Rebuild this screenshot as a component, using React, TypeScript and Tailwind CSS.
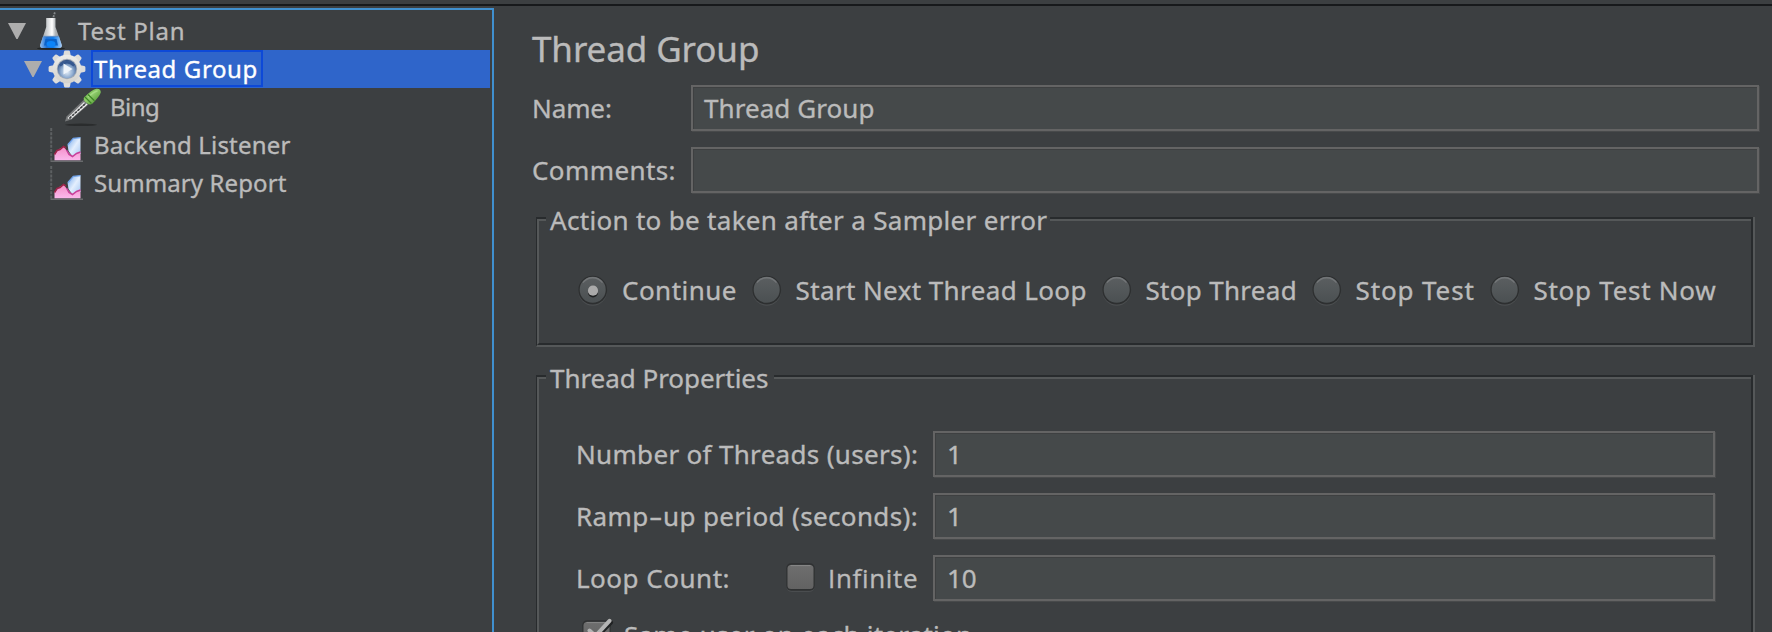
import type { ReactNode } from "react";

function Arrow() {
  return (
    <svg width="18" height="16" viewBox="0 0 18 16" className="shrink-0">
      <path d="M0 0H18L9.6 16H8.4Z" fill="#adadad" />
    </svg>
  );
}

function FlaskIcon() {
  return (
    <svg width="38" height="38" viewBox="0 0 38 38" className="shrink-0">
      <defs>
        <linearGradient id="glass" x1="0" x2="1" y1="0" y2="0">
          <stop offset="0" stopColor="#8e9396" />
          <stop offset=".35" stopColor="#d4d7d9" />
          <stop offset=".55" stopColor="#ffffff" />
          <stop offset=".7" stopColor="#b3b7ba" />
          <stop offset="1" stopColor="#85898d" />
        </linearGradient>
        <linearGradient id="liquid" x1="0" x2="1" y1="0" y2="0">
          <stop offset="0" stopColor="#8fbdf0" />
          <stop offset=".3" stopColor="#1c6fd4" />
          <stop offset=".6" stopColor="#0a7cf0" />
          <stop offset="1" stopColor="#a9cdf5" />
        </linearGradient>
      </defs>
      <ellipse cx="19" cy="36.500" rx="14" ry="1.300" fill="#222526" />
      <path d="M20.500 8L23 0" stroke="#85898c" strokeWidth="1.800" strokeDasharray="2 1" />
      <path d="M14.200 6H23.500V15L29.800 33Q30.300 36 27 36H10.500Q7.800 36 8.200 33L14.200 15Z" fill="url(#glass)" />
      <path d="M11 24.500H27L29.800 33Q30.300 36 27 36H10.500Q7.800 36 8.200 33Z" fill="url(#liquid)" />
      <path d="M13.500 27H24.500L26 33.500H12Z" fill="#0b62c8" />
      <ellipse cx="19" cy="32" rx="4.500" ry="3" fill="#0b84fa" />
      <path d="M11.500 24.500H26.500" stroke="#5d8fc9" strokeWidth="1.300" />
    </svg>
  );
}

const teeth = [0, 45, 90, 135, 180, 225, 270, 315];

function GearIcon() {
  return (
    <svg width="38" height="38" viewBox="0 0 38 38" className="shrink-0">
      <defs>
        <linearGradient id="gear" x1="0" x2="0" y1="0" y2="38" gradientUnits="userSpaceOnUse">
          <stop offset="0" stopColor="#f0f0ee" />
          <stop offset=".6" stopColor="#dddcd8" />
          <stop offset="1" stopColor="#cfcec9" />
        </linearGradient>
        <radialGradient id="hub" cx=".5" cy=".65" r=".65">
          <stop offset="0" stopColor="#e6eff8" />
          <stop offset=".5" stopColor="#8facd0" />
          <stop offset="1" stopColor="#27477e" />
        </radialGradient>
      </defs>
      <g fill="#dedddA">
        {teeth.map((a) => (
          <path key={a} d="M16 1.800Q16.200 .6 17.300 .6H20.700Q21.800 .6 22 1.800L23.200 8H14.800Z" transform={`rotate(${a} 19 19)`} />
        ))}
        <circle cx="19" cy="19" r="14.300" fill="url(#gear)" />
      </g>
      <circle cx="19" cy="19" r="10.200" fill="#a3acb8" />
      <circle cx="19" cy="19" r="9.300" fill="url(#hub)" />
      <path d="M11.800 15.500Q19 9 26.200 15.500" stroke="#34578f" strokeWidth="2.500" fill="none" />
      <path d="M15.500 13.500L24.500 19L15.500 24.500Z" fill="#eef4fa" />
    </svg>
  );
}

function DropperIcon() {
  return (
    <svg width="38" height="38" viewBox="0 0 38 38" className="shrink-0">
      <defs>
        <linearGradient id="bulb" x1="0" x2="1" y1="0" y2="1">
          <stop offset="0" stopColor="#5fae3a" />
          <stop offset=".45" stopColor="#8fcb6c" />
          <stop offset="1" stopColor="#3f8a22" />
        </linearGradient>
      </defs>
      <ellipse cx="17" cy="36.800" rx="16" ry="1.200" fill="#2a2c2d" />
      <path d="M1 33.500L2.500 28.500L19.500 12L24.500 16.500L7.500 31.500Z" fill="#77797a" />
      <path d="M4 30.500L20.500 14.500" stroke="#e6e6e6" strokeWidth="1.500" />
      <path d="M6.500 30.500L23 16" stroke="#f4f4f4" strokeWidth="1.500" />
      <path d="M5.500 30.300L21.500 15.500" stroke="#3d3f40" strokeWidth="1.600" strokeDasharray="2.500 1.200" />
      <path d="M20 9.500Q28 1.500 32.500 .7Q37 .5 36.800 4.500Q35.500 8.500 28.500 15.500Q26 17.500 23 15.200Q18.500 12 20 9.500Z" fill="url(#bulb)" />
      <path d="M24 9Q30 3.500 33.500 3" stroke="#a5da84" strokeWidth="1.600" fill="none" />
      <path d="M21 9L27.500 15.500M24 6.500L30.500 12.800" stroke="#3c8424" strokeWidth="1.200" />
    </svg>
  );
}

function ChartIcon() {
  return (
    <svg width="38" height="38" viewBox="0 0 38 38" className="shrink-0">
      <defs>
        <linearGradient id="sky" x1="0" x2="1" y1="0" y2="1">
          <stop offset="0" stopColor="#6fa5ea" />
          <stop offset=".5" stopColor="#e4effd" />
          <stop offset="1" stopColor="#a0c5f3" />
        </linearGradient>
        <linearGradient id="rose" x1="0" x2="0" y1="0" y2="1">
          <stop offset="0" stopColor="#f58fc8" />
          <stop offset="1" stopColor="#fbb8ec" />
        </linearGradient>
      </defs>
      <path d="M3.200 2V35" stroke="#5d6062" strokeWidth="2" strokeDasharray="3 1.200" />
      <path d="M2.500 35.200H35" stroke="#696b6d" strokeWidth="1.600" />
      <path d="M19.500 18.500L25 12.500L32.500 11.500V28L29 28L25 31L20.500 25Z" fill="url(#sky)" />
      <path d="M20 18.500L25.300 12.300L32.500 11.600" stroke="#6fa2ea" strokeWidth="1.300" fill="none" />
      <path d="M6.500 34.200V28L12 22.500L16 21L18.500 24.500L24 30L28 27.500L32.500 26.500V34.200Z" fill="url(#rose)" />
      <path d="M6.500 28.500L9 24.500L12 23.500L15.500 20.500L18 22" stroke="#9c2348" strokeWidth="1.600" fill="none" />
      <path d="M18.500 24L21 28.500L24.500 30.500L28.500 27.500L32.500 26" stroke="#c9409a" strokeWidth="1.500" fill="none" />
    </svg>
  );
}

function TreeRow({ className, children }: { className: string; children: ReactNode }) {
  return <div className={`flex h-[38px] items-center whitespace-nowrap text-[24px] leading-[38px] ${className}`}>{children}</div>;
}

function Field({ className, children }: { className: string; children?: ReactNode }) {
  return (
    <div className={`flex h-[46px] items-center border-2 border-[#646464] bg-[#45494a] pl-[11px] shadow-[1px_1px_0_#484a4b,inset_1px_1px_0_#3e4041] ${className}`}>
      {children}
    </div>
  );
}

function Radio({ checked }: { checked?: boolean }) {
  return (
    <svg width="32" height="34" viewBox="0 0 32 34" className="shrink-0">
      <defs>
        <linearGradient id="knob" x1="0" x2="0" y1="0" y2="1">
          <stop offset="0" stopColor="#5b5f61" />
          <stop offset="1" stopColor="#4b5052" />
        </linearGradient>
      </defs>
      <circle cx="15.700" cy="18.500" r="14.300" fill="#4b4e50" />
      <circle cx="15.700" cy="17.100" r="14.400" fill="#2d2f30" />
      <circle cx="15.700" cy="16.800" r="13" fill="url(#knob)" />
      <path d="M5.900 9.700A12.200 12.200 0 0 1 25.500 9.700" stroke="#737678" strokeWidth="1.300" fill="none" />
      {checked && (
        <>
          <circle cx="16" cy="19.500" r="5" fill="#1f2122" />
          <circle cx="16" cy="17.700" r="5.100" fill="#aaaaaa" />
        </>
      )}
    </svg>
  );
}

function Checkbox({ checked }: { checked?: boolean }) {
  return (
    <svg width="32" height="34" viewBox="0 0 32 34" className="shrink-0 overflow-visible">
      <defs>
        <linearGradient id="box" x1="0" x2="0" y1="0" y2="1">
          <stop offset="0" stopColor="#6e6e6e" />
          <stop offset="1" stopColor="#626262" />
        </linearGradient>
      </defs>
      <rect x="1.500" y="5" width="28" height="26" rx="5" fill="#4a4d4f" />
      <rect x="1.200" y="2.300" width="28.600" height="27.500" rx="5" fill="#2f3132" />
      <rect x="2.500" y="4" width="26" height="24" rx="3.500" fill="url(#box)" />
      <path d="M5.500 4.500H25.500" stroke="#858585" strokeWidth="1.200" />
      {checked && (
        <>
          <path d="M9 14.500L14.500 20.500L30 4.500" stroke="#202223" strokeWidth="4" fill="none" strokeLinecap="round" />
          <path d="M8.500 12.500L14.500 18L28.500 2.800" stroke="#b4b4b4" strokeWidth="4" fill="none" strokeLinecap="round" />
        </>
      )}
    </svg>
  );
}

function Group({ title, titleClass, className, children }: { title: string; titleClass: string; className: string; children: ReactNode }) {
  return (
    <section className={`flex flex-col ${className}`}>
      <header className="flex h-9">
        <div className="mt-[15px] w-[10px] border-l border-t-2 border-[#282b2d]">
          <div className="h-full border-l-2 border-t-2 border-[#555859]" />
        </div>
        <h2 className={`h-9 whitespace-nowrap pl-1 leading-9 ${titleClass}`}>{title}</h2>
        <div className="mt-[15px] flex-1 border-r-2 border-[#555859]">
          <div className="h-full border-r-2 border-t-2 border-[#282b2d]">
            <div className="border-t-2 border-[#555859]" />
          </div>
        </div>
      </header>
      <div className="flex flex-1 border-b-2 border-l border-[#555859] border-l-[#282b2d]">
        <div className="flex-1 border-b-2 border-l-2 border-[#282b2d] border-l-[#555859]">{children}</div>
        <div className="w-4 shrink-0 border-b-2 border-r-2 border-[#282b2d]" />
        <div className="w-0.5 shrink-0 bg-[#555859]" />
      </div>
    </section>
  );
}

export default function App() {
  return (
    <div className="flex h-[632px] w-[1772px] flex-col overflow-hidden bg-[#3c3f41] font-['Noto_Sans','Liberation_Sans',sans-serif] text-[26px] text-[#bbbbbb] [-webkit-text-stroke:0.35px]">
      <div className="h-1.5 shrink-0 border-b-2 border-[#17191b]" />
      <div className="flex min-h-0 flex-1">
        <nav className="mt-0.5 w-[494px] shrink-0 border-r-2 border-t-2 border-[#4090cf] pr-0.5 pt-0.5">
          <TreeRow className="pl-2">
            <Arrow />
            <span className="ml-[6px] flex"><FlaskIcon /></span>
            <span className="ml-2 tracking-[0.75px]">Test Plan</span>
          </TreeRow>
          <TreeRow className="bg-[#2f65ca] pl-6 text-white">
            <Arrow />
            <span className="ml-[6px] flex"><GearIcon /></span>
            <span className="ml-[5px] h-[37px] w-[172px] self-start border-2 border-[#0d49d8] pl-px leading-[34px] tracking-[0.6px]">Thread Group</span>
          </TreeRow>
          <TreeRow className="pl-16">
            <DropperIcon />
            <span className="ml-2 tracking-[-0.5px]">Bing</span>
          </TreeRow>
          <TreeRow className="pl-12">
            <ChartIcon />
            <span className="ml-2 tracking-[0.19px]">Backend Listener</span>
          </TreeRow>
          <TreeRow className="pl-12">
            <ChartIcon />
            <span className="ml-2 tracking-[0.1px]">Summary Report</span>
          </TreeRow>
        </nav>

        <main className="flex min-w-0 flex-1 flex-col pl-[38px] pt-[21px]">
          <h1 className="h-11 shrink-0 text-[35px] font-normal leading-[44px] tracking-[-0.09px]">Thread Group</h1>
          <div className="mt-[14px] flex h-[46px] shrink-0 items-center">
            <span className="w-[159px] tracking-[-0.1px]">Name:</span>
            <Field className="w-[1068px]"><span className="tracking-[0.07px]">Thread Group</span></Field>
          </div>
          <div className="mt-4 flex h-[46px] shrink-0 items-center">
            <span className="w-[159px] tracking-[0.4px]">Comments:</span>
            <Field className="w-[1068px]" />
          </div>

          <Group title="Action to be taken after a Sampler error" titleClass="w-[504px] tracking-[0.31px]" className="ml-1 mt-[9px] h-[145px] w-[1219px] shrink-0">
            <div className="flex h-[104px] items-center whitespace-nowrap pl-[38px]">
              <div className="flex w-[173.500px] items-center gap-[13px]"><Radio checked /><span className="tracking-[0.48px]">Continue</span></div>
              <div className="flex w-[350px] items-center gap-[13px]"><Radio /><span className="tracking-[0.39px]">Start Next Thread Loop</span></div>
              <div className="flex w-[210px] items-center gap-[13px]"><Radio /><span className="tracking-[0.3px]">Stop Thread</span></div>
              <div className="flex w-[178px] items-center gap-[13px]"><Radio /><span className="tracking-[0.89px]">Stop Test</span></div>
              <div className="flex items-center gap-[13px]"><Radio /><span className="tracking-[0.73px]">Stop Test Now</span></div>
            </div>
          </Group>

          <Group title="Thread Properties" titleClass="w-[228px] tracking-[-0.04px]" className="ml-1 mt-[13px] h-[400px] w-[1219px] shrink-0">
            <div className="flex flex-col whitespace-nowrap pl-[37px] pt-[35px]">
              <div className="flex h-[46px] items-center">
                <span className="w-[357px] tracking-[0.32px]">Number of Threads (users):</span>
                <Field className="w-[782px]"><span className="ml-px">1</span></Field>
              </div>
              <div className="mt-4 flex h-[46px] items-center">
                <span className="w-[357px] tracking-[0.36px]">
                  Ramp<span className="inline-block w-[14.500px] origin-left scale-x-[1.6]">-</span>up period (seconds):
                </span>
                <Field className="w-[782px]"><span className="ml-px">1</span></Field>
              </div>
              <div className="mt-4 flex h-[46px] items-center">
                <span className="w-[209px] tracking-[0.5px]">Loop Count:</span>
                <div className="flex w-[148px] items-center gap-[11px]">
                  <Checkbox />
                  <span className="font-['Open_Sans','Noto_Sans',sans-serif] tracking-[0.67px]">Infinite</span>
                </div>
                <Field className="w-[782px]"><span className="ml-px">10</span></Field>
              </div>
              <div className="mt-3 flex h-11 items-center gap-[11px] pl-[5px]">
                <Checkbox checked />
                <span className="tracking-[0.24px]">Same user on each iteration</span>
              </div>
            </div>
          </Group>
        </main>
      </div>
    </div>
  );
}
